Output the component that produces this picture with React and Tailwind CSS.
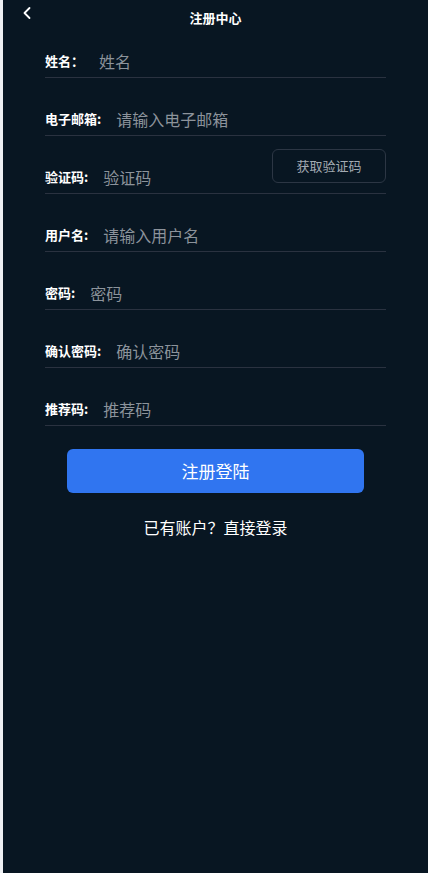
import React from 'react';

const fields = [
  { label: '姓名：', placeholder: '姓名' },
  { label: '电子邮箱:', placeholder: '请输入电子邮箱' },
  { label: '验证码:', placeholder: '验证码', code: true },
  { label: '用户名:', placeholder: '请输入用户名' },
  { label: '密码:', placeholder: '密码' },
  { label: '确认密码:', placeholder: '确认密码' },
  { label: '推荐码:', placeholder: '推荐码' },
];

function Field({ label, placeholder, code, first }) {
  return (
    <div
      className={
        'flex h-[34px] items-center border-b border-[#2a3240] ' +
        (first ? 'mt-[7px]' : 'mt-[24px]')
      }
    >
      <span className="shrink-0 text-[13px] font-semibold text-white">{label}</span>
      <span className="ml-[15px] flex-1 text-[16px] text-[#8c939b]">{placeholder}</span>
      {code && (
        <button className="h-[34px] w-[114px] -translate-y-[11px] rounded-[6px] border border-[#2c3644] text-[13px] text-[#a3aab2]">
          获取验证码
        </button>
      )}
    </div>
  );
}

export default function App() {
  return (
    <div
      className="flex min-h-[873px] w-full"
      style={{ fontFamily: '"Noto Sans CJK SC", "Noto Sans", sans-serif' }}
    >
      <div className="w-[3px] shrink-0 bg-[#eef0f3]" />
      <div className="flex-1 bg-[#081622]">
        {/* header */}
        <div className="relative flex h-[37px] items-center justify-center">
          <svg
            className="absolute left-[14px] top-[3px]"
            width="20"
            height="20"
            viewBox="0 0 24 24"
            fill="none"
            stroke="white"
            strokeWidth="2.2"
            strokeLinecap="round"
            strokeLinejoin="round"
          >
            <path d="M15 18l-6-6 6-6" />
          </svg>
          <h1 className="-mt-[2px] text-[13px] font-bold text-white">注册中心</h1>
        </div>

        <div className="px-[42px]">
          {fields.map((f, i) => (
            <Field key={f.label} {...f} first={i === 0} />
          ))}
        </div>

        <div className="mt-[23px] flex justify-center">
          <button className="h-[44px] w-[297px] rounded-[6px] bg-[#3075f0] text-[17px] text-white">
            注册登陆
          </button>
        </div>
        <p className="mt-[22px] text-center text-[16px] text-white">已有账户？直接登录</p>
      </div>
    </div>
  );
}
